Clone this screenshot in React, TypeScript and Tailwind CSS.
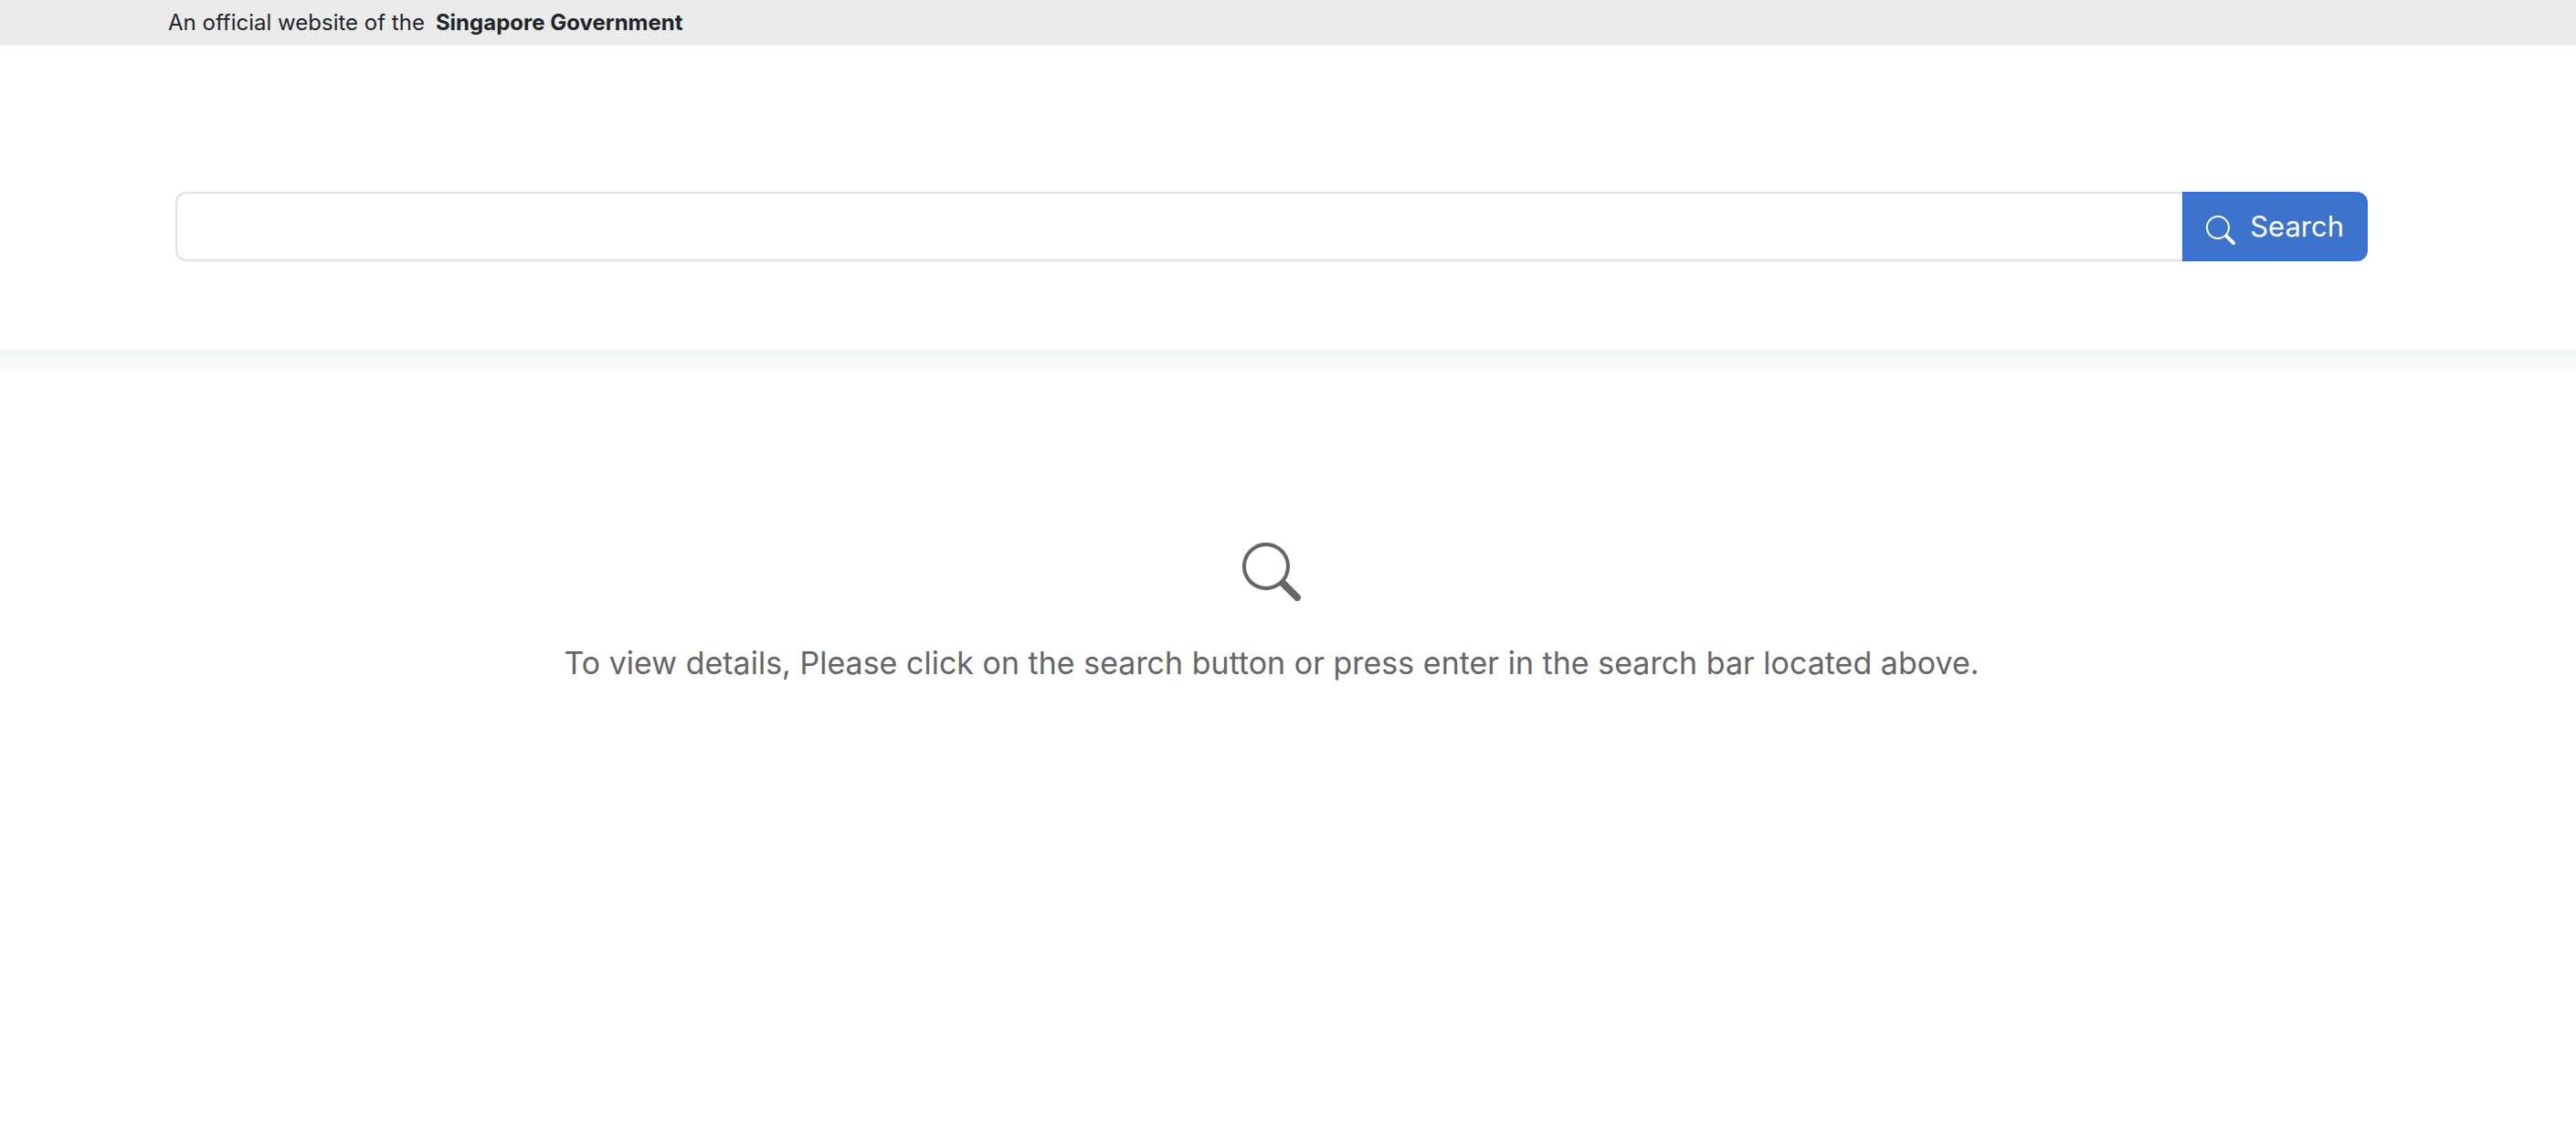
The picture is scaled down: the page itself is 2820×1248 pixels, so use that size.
import { useState } from "react";
import { BsSearch } from "react-icons/bs";

function GovernmentBanner() {
  return (
    <div className="h-[50px] bg-[#ebebeb] pl-[184px] pr-9 flex items-center gap-3 text-2xl text-[#212529]">
      <span>An official website of the</span>
      <strong className="font-bold">Singapore Government</strong>
    </div>
  );
}

function SearchForm() {
  const [query, setQuery] = useState("");
  return (
    <form
      role="search"
      onSubmit={(event) => event.preventDefault()}
      className="flex h-[76px] w-full"
    >
      <input
        type="text"
        aria-label="Search"
        value={query}
        onChange={(event) => setQuery(event.target.value)}
        className="min-w-0 flex-1 rounded-l-xl border-2 border-r-0 border-[#dee2e6] bg-white px-6 text-[31px] text-[#212529] outline-none"
      />
      <button
        type="submit"
        className="flex items-center gap-4 rounded-r-xl border-2 border-[#316cf4] bg-[#3b73cd] px-6 text-[31px] text-white"
      >
        <BsSearch className="mt-2 size-8" aria-hidden="true" />
        Search
      </button>
    </form>
  );
}

export default function App() {
  return (
    <div className="min-h-screen bg-white font-['Inter',sans-serif]">
      <GovernmentBanner />
      <header className="bg-white pt-40 pb-24 pl-48 pr-[228px]">
        <SearchForm />
      </header>
      <div className="h-8 bg-linear-to-b from-[#f3f5f4] via-[#f9fbfa] to-white" />
      <main className="flex flex-col items-center gap-12 pr-9 pt-[180px] text-[#666666]">
        <BsSearch className="size-16" aria-hidden="true" />
        <p className="text-[34px] leading-10">
          To view details, Please click on the search button or press enter in the search bar located above.
        </p>
      </main>
    </div>
  );
}
